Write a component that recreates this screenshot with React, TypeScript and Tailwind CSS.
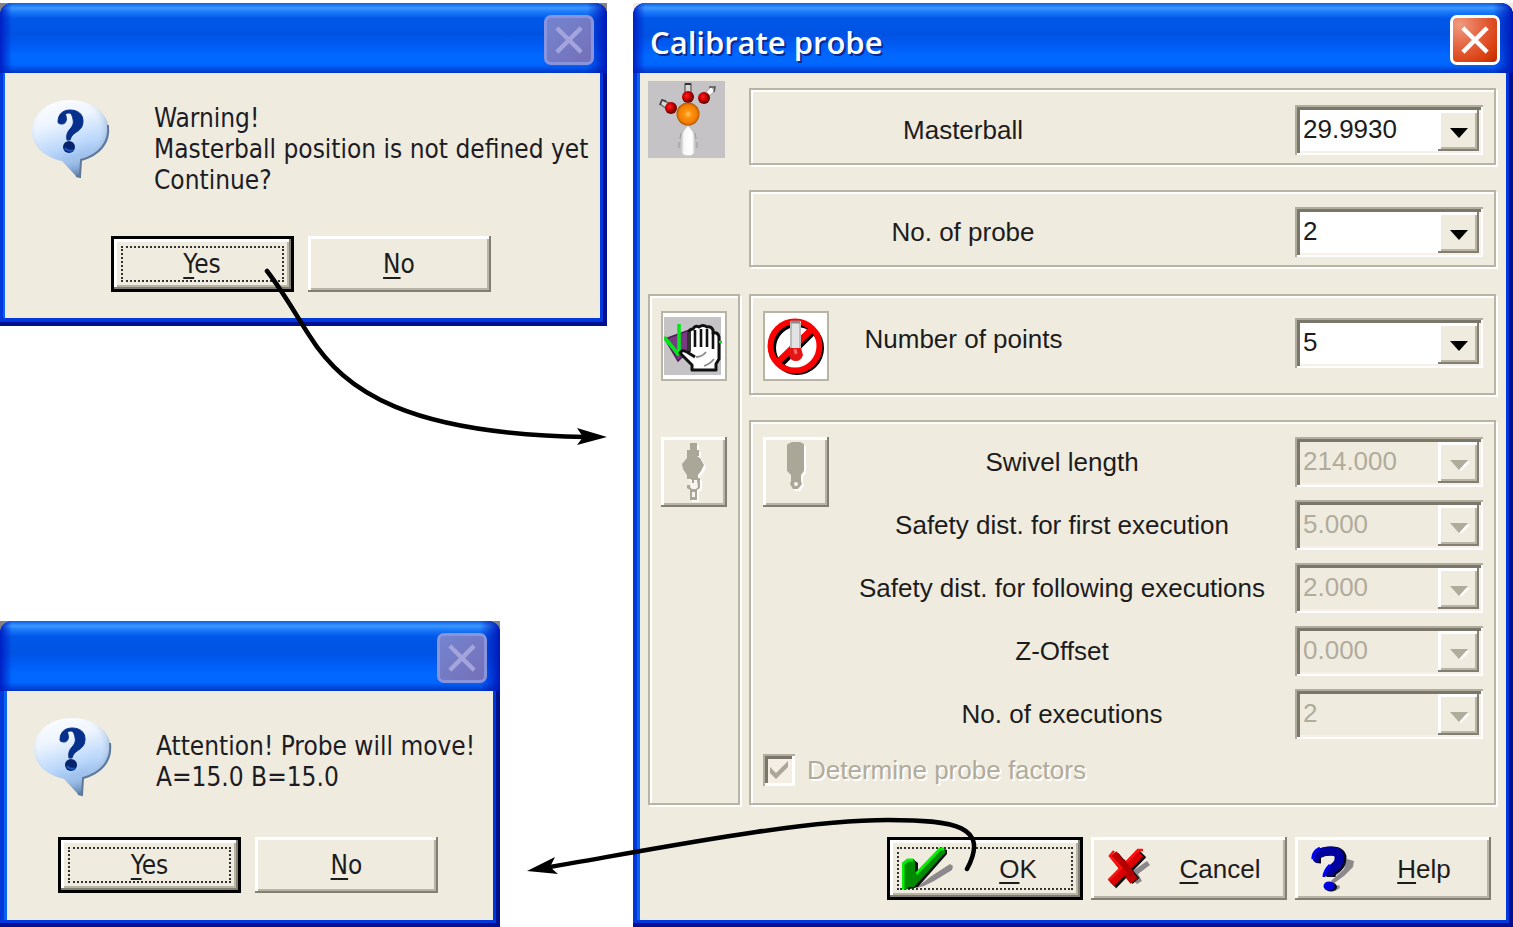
import { ReactNode, useId } from "react";

const raised =
  "shadow-[inset_-2px_-2px_#827e71,inset_3px_3px_#ffffff,inset_-4px_-4px_#b8b4a6]";
const etched =
  "border-2 border-[#b8b4a6] shadow-[inset_2px_2px_#ffffff,2px_2px_#ffffff]";
const systemFont = "font-['DejaVu_Sans_Condensed','DejaVu_Sans',sans-serif] text-[26px]";
const formFont = "font-['Liberation_Sans',sans-serif] text-[26px]";

function CloseGlyph() {
  return (
    <svg viewBox="0 0 50 50" className="size-full" aria-hidden="true">
      <path d="M13 13 37 37M37 13 13 37" stroke="currentColor" strokeWidth="5" strokeLinecap="square" fill="none" />
    </svg>
  );
}

function Window({
  title,
  closable = false,
  corner,
  className,
  children,
}: {
  title?: string;
  closable?: boolean;
  corner: string;
  className: string;
  children: ReactNode;
}) {
  return (
    <section className={`${corner} ${className}`}>
      <div className="flex h-full flex-col rounded-t-[12px] bg-[#0038dc] shadow-[inset_-4px_-4px_#001090]">
        <header className="flex h-[70px] items-center justify-between rounded-t-[12px] bg-[linear-gradient(90deg,#001fc4_0px,#0040e000_12px,#0040e000_calc(100%_-_20px),#0018b8_100%),linear-gradient(180deg,#0a5fe6_0%,#3c98ff_7%,#1a78fa_13%,#0058e8_22%,#0053e2_45%,#005cf6_62%,#0068ff_75%,#0066ff_88%,#0046da_96%,#0036c0_100%)] pt-1 pr-[13px] pl-[17px]">
          <h2 className="pt-1 font-['Open_Sans','Noto_Sans',sans-serif] text-[31px] leading-9 font-semibold text-white [text-shadow:2px_2px_#0a2a90]">
            {title}
          </h2>
          <button
            type="button"
            aria-label="Close"
            disabled={!closable}
            className={
              closable
                ? "size-[50px] rounded-[7px] border-[3px] border-white bg-[radial-gradient(circle_at_15%_15%,#f09a80,#e4603c_45%,#d83c0c_80%,#b82c00)] text-white"
                : "size-[50px] rounded-[7px] border-[3px] border-[#8a94dc] bg-[linear-gradient(135deg,#7484d0,#7470b8)] text-[#a4a4dc]"
            }
          >
            <CloseGlyph />
          </button>
        </header>
        {children}
      </div>
    </section>
  );
}

function PushButton({
  label,
  isDefault = false,
  icon,
  className,
}: {
  label: string;
  isDefault?: boolean;
  icon?: ReactNode;
  className: string;
}) {
  return (
    <button
      type="button"
      className={`relative flex items-center justify-center bg-[#f0ebdf] text-[#1c1c1c] ${raised} ${
        isDefault ? "border-[3px] border-black" : ""
      } ${className}`}
    >
      {isDefault && (
        <span className="absolute inset-[7px] border-2 border-dotted border-[#333]" />
      )}
      {icon}
      <span className={icon ? "flex-1 text-center" : ""}>
        <span className="underline decoration-2 underline-offset-4">{label[0]}</span>
        {label.slice(1)}
      </span>
    </button>
  );
}

function QuestionBubble() {
  return (
    <svg width="80" height="80" viewBox="0 0 80 80" className="shrink-0" aria-hidden="true">
      <defs>
        <linearGradient id="bubble" x1="0" y1="0" x2="0.3" y2="1">
          <stop offset="0" stopColor="#ffffff" />
          <stop offset="0.35" stopColor="#eef5ff" />
          <stop offset="0.7" stopColor="#b8d6fb" />
          <stop offset="1" stopColor="#7fa8dc" />
        </linearGradient>
        <radialGradient id="gloss" cx="0.46" cy="0.38" r="0.62">
          <stop offset="0.6" stopColor="#ffffff" stopOpacity="0" />
          <stop offset="0.85" stopColor="#7f9cc4" stopOpacity="0.4" />
          <stop offset="1" stopColor="#5c7290" stopOpacity="0.85" />
        </radialGradient>
      </defs>
      <path
        d="M39 1C60 1 78 13 78 32C78 46 68 57 50 62L49 78L46 78L31 62C12 58 1 46 1 32C1 14 18 1 39 1Z"
        fill="url(#bubble)"
      />
      <path
        d="M39 1C60 1 78 13 78 32C78 46 68 57 50 62L49 78L46 78L31 62C12 58 1 46 1 32C1 14 18 1 39 1Z"
        fill="url(#gloss)"
      />
      <path d="M77 26C79 44 68 56 50 61L49 78L45 77" fill="none" stroke="#5f7898" strokeWidth="2" />
      <path
        d="M27 23C27 15 32 11 39 11C47 11 52 15 52 22C52 28 49 31 44 34C41 36 40 38 39 41L36 41C35 35 37 32 40 29C42 26 43 24 42 20C41 16 40 14 38 14C35 14 34 15 35 17C36 21 35 25 31 25C28 25 27 24 27 23Z"
        fill="#06308c"
        stroke="#06308c"
        strokeWidth="1"
      />
      <circle cx="38" cy="48" r="6" fill="#06246e" />
      <path d="M34 49A6 6 0 0 0 42 51" stroke="#1d58b8" strokeWidth="2" fill="none" />
    </svg>
  );
}

function MessageBox({
  lines,
  className,
  corner,
  textClass,
  bodyClass,
}: {
  lines: string[];
  className: string;
  corner: string;
  textClass: string;
  bodyClass: string;
}) {
  return (
    <Window className={className} corner={corner}>
      <div className={`bg-[#f0ebdf] pt-[26px] text-[#1c1c24] ${systemFont} ${bodyClass}`}>
        <div className="flex gap-[43px] pl-[26px]">
          <QuestionBubble />
          <p className={`leading-[31px] whitespace-nowrap ${textClass}`}>
            {lines.map((line) => (
              <span key={line} className="block">
                {line}
              </span>
            ))}
          </p>
        </div>
        <div className="mt-10 flex justify-center gap-[14px] pr-1">
          <PushButton label="Yes" isDefault className="h-14 w-[183px]" />
          <PushButton label="No" className="h-14 w-[183px]" />
        </div>
      </div>
    </Window>
  );
}

function Combo({
  id,
  options,
  disabled = false,
}: {
  id: string;
  options: string[];
  disabled?: boolean;
}) {
  return (
    <div className="relative h-[50px] w-[188px] shrink-0">
      <select
        id={id}
        disabled={disabled}
        className={`size-full appearance-none pr-12 pb-[2px] pl-2 text-[#1c1c1c] opacity-100 shadow-[inset_2px_2px_#b0ac9e,inset_-2px_-2px_#ffffff,inset_5px_5px_#7a766a,inset_-4px_-4px_#f8efe6] disabled:text-[#b0ac9c] ${
          disabled ? "bg-[#f0ebdf]" : "bg-white"
        }`}
      >
        {options.map((option) => (
          <option key={option}>{option}</option>
        ))}
      </select>
      <span
        className={`pointer-events-none absolute top-[5px] right-1 flex h-[41px] w-[41px] items-center justify-center bg-[#f0ebdf] ${raised}`}
      >
        <svg width="22" height="14" viewBox="0 0 22 14" className="mt-1" aria-hidden="true">
          {disabled && <path d="M4 4H22L13 13Z" fill="#ffffff" />}
          <path d="M2 2H20L11 12Z" fill={disabled ? "#b0ac9c" : "#000000"} />
        </svg>
      </span>
    </div>
  );
}

function Field({
  label,
  options,
  disabled,
  labelClass = "",
}: {
  label: string;
  options: string[];
  disabled?: boolean;
  labelClass?: string;
}) {
  const id = useId();
  return (
    <div className="flex flex-1 items-center">
      <label htmlFor={id} className={`flex-1 text-center whitespace-nowrap ${labelClass}`}>
        {label}
      </label>
      <Combo id={id} options={options} disabled={disabled} />
    </div>
  );
}

function MasterballIcon() {
  return (
    <svg width="77" height="77" viewBox="0 0 77 77" className="bg-[#c6c3c6]" role="img" aria-label="Masterball">
      <defs>
        <radialGradient id="orange">
          <stop offset="0" stopColor="#ffd070" />
          <stop offset="0.3" stopColor="#ff9410" />
          <stop offset="0.8" stopColor="#f07c00" />
          <stop offset="1" stopColor="#a85400" />
        </radialGradient>
        <radialGradient id="red" cx="0.4" cy="0.4">
          <stop offset="0" stopColor="#ff2020" />
          <stop offset="0.6" stopColor="#d00000" />
          <stop offset="1" stopColor="#700000" />
        </radialGradient>
        <linearGradient id="stand">
          <stop offset="0" stopColor="#b4b2b4" />
          <stop offset="0.25" stopColor="#f8f8f8" />
          <stop offset="0.75" stopColor="#ffffff" />
          <stop offset="1" stopColor="#b4b2b4" />
        </linearGradient>
      </defs>
      <path d="M37 12V3H43V12" fill="#d8d8d8" stroke="#6a6764" strokeWidth="1.4" />
      <path d="M37 3H43" stroke="#333" strokeWidth="2" />
      <path d="M19 28L12 23L14 19L23 23" fill="#d8d8d8" stroke="#6a6764" strokeWidth="1.4" />
      <path d="M12 24L14 19L18 20" stroke="#444" strokeWidth="1.6" fill="none" />
      <path d="M56 13L63 6L67 10L60 16" fill="#f6f6f6" stroke="#a8a5a5" strokeWidth="1" />
      <path d="M61 6H67L66 11" stroke="#555" strokeWidth="1.6" fill="none" />
      <circle cx="23" cy="27" r="6" fill="url(#red)" />
      <circle cx="40" cy="16" r="6" fill="url(#red)" />
      <circle cx="56" cy="17" r="6" fill="url(#red)" />
      <circle cx="40" cy="33" r="11.5" fill="url(#orange)" />
      <path d="M40 45C44 49 47 54 48 60L47 72Q40 77 33 72L32 60C33 54 36 49 40 45Z" fill="url(#stand)" />
      <path d="M33 52L32 58M47 52L48 58M31 61V67M49 61V67" stroke="#a19ea0" strokeWidth="1.2" />
    </svg>
  );
}

function HandIcon() {
  return (
    <svg width="60" height="62" viewBox="0 0 60 62" aria-hidden="true">
      <rect x="0" y="2" width="57" height="58" fill="#c6c3c6" />
      <path d="M1 24L28 14V41H19L14 46Z" fill="#7a3a82" stroke="#4c1c54" strokeWidth="1.5" />
      <path d="M0 22L15 40M15 9V40" stroke="#00e818" strokeWidth="3.6" fill="none" />
      <path
        d="M25 37V18Q25 14 29 14Q31 10 35 12Q39 9 43 12Q47 11 49 15V18Q54 17 55 22V44L52 49V55H28V50L16 38Q18 34 23 37L31 42"
        fill="#ffffff"
        stroke="#111111"
        strokeWidth="3"
        strokeLinejoin="round"
      />
      <path d="M31 15V32M37 14V32M43 14V32M49 18V34" stroke="#111111" strokeWidth="2.6" />
      <path d="M25 17V36" stroke="#333333" strokeWidth="4" />
      <path d="M32 42Q38 42 42 37M40 51Q46 49 50 44" stroke="#8c8a8c" strokeWidth="1.8" fill="none" />
      <path d="M55 27H58" stroke="#00e818" strokeWidth="2.4" />
    </svg>
  );
}

function NoProbeIcon() {
  return (
    <svg width="62" height="66" viewBox="0 0 62 66" aria-hidden="true">
      <circle cx="32" cy="35" r="24" fill="none" stroke="#000000" strokeWidth="6" />
      <path d="M15 51L48 18" stroke="#000000" strokeWidth="8" />
      <circle cx="30" cy="33" r="24.5" fill="none" stroke="#ff0000" strokeWidth="6" />
      <path d="M13 49L47 16" stroke="#ff0000" strokeWidth="6.5" />
      <rect x="25" y="8" width="11" height="28" fill="#e2e2e2" />
      <path d="M26 8V36M35 10V36" stroke="#b2b2b2" strokeWidth="1.6" />
      <path d="M26 9H35" stroke="#8a8a8a" strokeWidth="3" />
      <path d="M25 35H36L38 42Q36 48 31 48Q25 48 24 42Z" fill="#e41414" />
      <path d="M30 36L31 41" stroke="#f06a6a" strokeWidth="3" />
    </svg>
  );
}

function SwivelIcon() {
  const shape =
    "M29 6H36V13H38V19H36L39 21L43 28L40 34L37 38V41H39V51L36 53V63H29V53L26 51V48H30V42H26V38L22 32L21 27L26 21V13H29Z";
  return (
    <svg width="66" height="70" viewBox="0 0 66 70" aria-hidden="true">
      <path d={shape} fill="#ffffff" transform="translate(2 2)" />
      <path d={shape} fill="#aaa698" />
      <path d="M30 43H36L37 50L35 52H31L29 50ZM31 55H34V60H31Z" fill="#f8f5ee" />
      <path d="M32 38V46" stroke="#aaa698" strokeWidth="2" />
    </svg>
  );
}

function ProbeIcon() {
  const shape = "M25 7L29 5H37L41 7V34L38 38V44L39 47L35 52H30L27 47L28 44V38L24 34V8Z";
  return (
    <svg width="66" height="70" viewBox="0 0 66 70" aria-hidden="true">
      <path d={shape} fill="#ffffff" transform="translate(2 2)" />
      <path d={shape} fill="#aaa698" />
      <circle cx="33" cy="47" r="2" fill="#f8f5ee" />
    </svg>
  );
}

function ToolButton({
  label,
  selected = false,
  children,
}: {
  label: string;
  selected?: boolean;
  children: ReactNode;
}) {
  return (
    <button
      type="button"
      aria-label={label}
      aria-pressed={selected}
      disabled={!selected}
      className={`flex h-[70px] w-[66px] shrink-0 items-center justify-center ${
        selected ? "border-2 border-[#b8b4a6] bg-white" : `bg-[#f0ebdf] ${raised}`
      }`}
    >
      {children}
    </button>
  );
}

function OkIcon() {
  return (
    <svg width="54" height="44" viewBox="0 0 54 44" className="relative shrink-0" aria-hidden="true">
      <path d="M14 41L28 30L48 17L51 19L50 23L32 34L22 39Z" fill="#8c898c" />
      <path d="M4 42L12 13L16 16V25L40 1L45 3V7L16 40L8 42Z" fill="#111111" />
      <path d="M0 42V16L5 12H12L13 15V28L38 1L43 2V6L12 40H7L4 43Z" fill="#008a00" />
      <path d="M1 42V17L6 13H11M14 27L38 2L42 2" stroke="#00f000" strokeWidth="3" fill="none" />
    </svg>
  );
}

function CancelIcon() {
  return (
    <svg width="46" height="42" viewBox="0 0 46 42" className="shrink-0" aria-hidden="true">
      <path d="M20 27L40 13L43 17L31 26L35 33L30 36Z" fill="#8c898c" />
      <path d="M8 8L29 33M6 37L36 6" stroke="#111111" strokeWidth="9" />
      <path d="M6 6L27 33" stroke="#c00000" strokeWidth="9" />
      <path d="M4 35L33 5" stroke="#d80000" strokeWidth="9" />
      <path d="M2 32L14 20L3 8L7 3M19 15L31 2H36" stroke="#ff1010" strokeWidth="2.6" fill="none" />
      <path d="M15 13L25 27" stroke="#b00000" strokeWidth="6" />
    </svg>
  );
}

function HelpIcon() {
  return (
    <svg width="46" height="46" viewBox="0 0 46 46" className="shrink-0" aria-hidden="true">
      <path d="M20 35L33 23L36 13L43 15L42 21L33 30L22 38ZM22 41L28 39L29 42L24 45Z" fill="#8c898c" />
      <path
        d="M10 13Q4 13 8 8Q13 5 21 5Q32 5 31 14Q30 20 24 24Q20 26 20 31"
        stroke="#080820"
        strokeWidth="9"
        fill="none"
      />
      <path d="M8 13Q4 12 7 8Q12 5 19 5Q29 5 28 13Q28 18 22 22Q17 25 17 30" stroke="#0000a0" strokeWidth="9" fill="none" />
      <path d="M2 13Q1 6 9 2M13 31Q13 25 19 19" stroke="#0000ff" strokeWidth="3" fill="none" />
      <ellipse cx="20" cy="41" rx="6" ry="4.5" fill="#080820" />
      <ellipse cx="18" cy="40" rx="5.5" ry="4.5" fill="#0000e0" />
    </svg>
  );
}

function CalibrateWindow() {
  return (
    <Window
      title="Calibrate probe"
      closable
      corner="bg-[#f0ebdf]"
      className="min-w-[880px] flex-1"
    >
      <form
        className={`mr-[7px] mb-[7px] ml-[7px] flex-1 bg-[#f0ebdf] pt-2 pr-[10px] pl-2 leading-8 text-[#1c1c1c] shadow-[-3px_0_#0a64f0] ${formFont}`}
      >
        <div className="grid grid-cols-[92px_1fr] gap-x-[9px] gap-y-[27px]">
          <MasterballIcon />
          <div className="mt-[7px] flex flex-col gap-[25px]">
            <div className={`flex h-[77px] pt-[7px] pr-[11px] ${etched}`}>
              <Field label="Masterball" options={["29.9930"]} labelClass="pr-[120px]" />
            </div>
            <div className={`flex h-[77px] pt-[7px] pr-[11px] ${etched}`}>
              <Field label="No. of probe" options={["2"]} labelClass="pr-[120px]" />
            </div>
          </div>

          <div className={`flex flex-col items-center gap-14 pt-[15px] ${etched}`}>
            <ToolButton label="Manual measurement" selected>
              <HandIcon />
            </ToolButton>
            <ToolButton label="Swivel head">
              <SwivelIcon />
            </ToolButton>
          </div>
          <div className="flex flex-col gap-[25px]">
            <div className={`flex h-[101px] items-start pt-[15px] pr-[11px] pl-3 ${etched}`}>
              <ToolButton label="No probe" selected>
                <NoProbeIcon />
              </ToolButton>
              <div className="flex flex-1 pt-[7px]">
                <Field label="Number of points" options={["5"]} labelClass="pr-[197px] pb-2" />
              </div>
            </div>
            <div className={`h-[385px] pt-[15px] pr-[11px] pl-3 ${etched}`}>
              <div className="flex items-start">
                <ToolButton label="Probe">
                  <ProbeIcon />
                </ToolButton>
                <div className="flex flex-1 flex-col gap-[13px]">
                  <Field label="Swivel length" options={["214.000"]} disabled />
                  <Field label="Safety dist. for first execution" options={["5.000"]} disabled />
                  <Field label="Safety dist. for following executions" options={["2.000"]} disabled />
                  <Field label="Z-Offset" options={["0.000"]} disabled />
                  <Field label="No. of executions" options={["2"]} disabled />
                </div>
              </div>
              <label className="mt-[15px] flex w-fit items-center gap-3 text-[#b0ac9c] [text-shadow:2px_2px_#ffffff]">
                <span className="relative size-8">
                  <input
                    type="checkbox"
                    defaultChecked
                    disabled
                    className="block size-full appearance-none bg-[#f4eee4] shadow-[inset_2px_2px_#b0ac9e,inset_-3px_-3px_#ffffff,inset_5px_5px_#7a766a]"
                  />
                  <svg viewBox="0 0 32 32" className="pointer-events-none absolute inset-0" aria-hidden="true">
                    <path d="M7 13L13 19L25 7V13L13 25L7 19Z" fill="#aaa698" />
                  </svg>
                </span>
                Determine probe factors
              </label>
            </div>
          </div>
        </div>
        <div className="mt-8 flex justify-end gap-2 pr-[5px] pb-[18px]">
          <PushButton label="OK" isDefault icon={<OkIcon />} className="h-[63px] w-[196px] pl-3" />
          <PushButton label="Cancel" icon={<CancelIcon />} className="h-[63px] w-[196px] pl-4" />
          <PushButton label="Help" icon={<HelpIcon />} className="h-[63px] w-[196px] pl-4" />
        </div>
      </form>
    </Window>
  );
}

function Arrows() {
  return (
    <svg
      width="1513"
      height="927"
      viewBox="0 0 1513 927"
      className="pointer-events-none absolute top-0 left-0"
      aria-hidden="true"
    >
      <g fill="none" stroke="#000000" strokeWidth="4.5" strokeLinecap="round">
        <path d="M267 271C284 293 296 315 309 335C345 393 410 434 586 437" />
        <path d="M967 869C990 826 955 820 888 820C800 820 660 848 550 867" />
      </g>
      <path d="M607 437L577 428L583 437L577 445Z" />
      <path d="M527 871L555 857L550 867L558 874Z" />
    </svg>
  );
}

export default function App() {
  return (
    <main className="relative flex min-h-screen bg-white pt-[3px]">
      <div className="mr-[26px] flex w-[607px] shrink-0 flex-col items-start justify-between">
        <MessageBox
          lines={["Warning!", "Masterball position is not defined yet", "Continue?"]}
          corner="bg-[#848284]"
          className="w-full"
          textClass="pt-1"
          bodyClass="mr-[7px] mb-2 ml-[5px] pb-[26px] shadow-[-2px_0_#0a64f0]"
        />
        <MessageBox
          lines={["Attention! Probe will move!", "A=15.0 B=15.0"]}
          corner="bg-[#848284]"
          className="w-[500px]"
          textClass="pt-[14px]"
          bodyClass="mr-[7px] mb-[7px] ml-[7px] pb-[27px] shadow-[-3px_0_#0a64f0]"
        />
      </div>
      <CalibrateWindow />
      <Arrows />
    </main>
  );
}
